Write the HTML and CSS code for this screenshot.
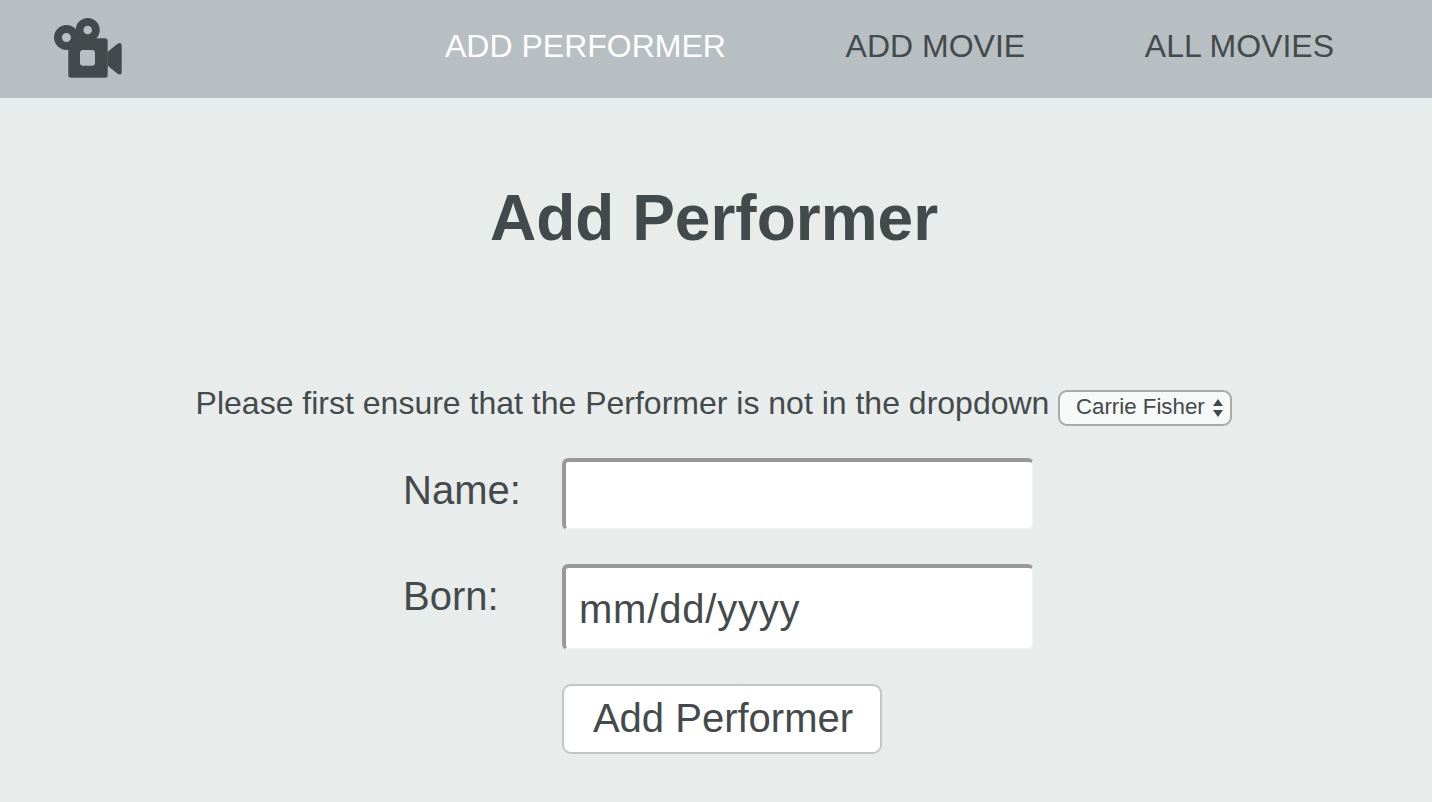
FILE: index.html
```html
<!DOCTYPE html>
<html lang="en">
<head>
<meta charset="utf-8">
<title>Add Performer</title>
<link rel="stylesheet" href="styles.css">
</head>
<body>
<header class="topbar">
  <a class="logo" href="#" aria-label="Home">
    <svg width="70" height="62" viewBox="0 0 70 62" aria-hidden="true">
      <path fill-rule="evenodd" fill="#434a4b" d="M1 21.500a12.500 12.500 0 1 0 25 0a12.500 12.500 0 1 0-25 0ZM8.900 21.500a4.500 4.500 0 1 1 9 0a4.500 4.500 0 1 1-9 0Z"/>
      <path fill-rule="evenodd" fill="#434a4b" d="M22.700 14a12 12 0 1 0 24 0a12 12 0 1 0-24 0ZM30.400 14a4.300 4.300 0 1 1 8.600 0a4.300 4.300 0 1 1-8.600 0Z"/>
      <path fill-rule="evenodd" fill="#434a4b" d="M15.300 33 24 22.300H52a2.700 2.700 0 0 1 2.700 2.700V59a2.700 2.700 0 0 1-2.700 2.700H18A2.700 2.700 0 0 1 15.300 59ZM30 34a3 3 0 0 0-3 3v9.700a3 3 0 0 0 3 3h9a3 3 0 0 0 3-3V37a3 3 0 0 0-3-3Z"/>
      <path fill="#434a4b" d="M54.500 36 64.500 27.700Q68.700 25.500 68.700 29.500V56Q68.700 60 64.500 57.800L54.500 49.500Z"/>
    </svg>
  </a>
  <nav class="nav">
    <a class="nav-link active" href="#">ADD PERFORMER</a>
    <a class="nav-link" href="#">ADD MOVIE</a>
    <a class="nav-link" href="#">ALL MOVIES</a>
  </nav>
</header>
<main class="content">
  <h1 class="title">Add Performer</h1>
  <p class="notice">
    <span>Please first ensure that the Performer is not in the dropdown</span>
    <span class="select"><span class="select-text">Carrie Fisher</span>
      <svg class="select-arrows" width="10" height="18" viewBox="0 0 10 18" aria-hidden="true"><path fill="#434a4b" d="M5 0 10 7H0ZM5 18 0 11H10Z"/></svg>
    </span>
  </p>
  <form class="form">
    <label class="label" for="name">Name:</label>
    <input class="field field-name" id="name" type="text">
    <label class="label" for="born">Born:</label>
    <input class="field field-born" id="born" type="text" placeholder="mm/dd/yyyy">
    <button class="submit" type="button">Add Performer</button>
  </form>
</main>
</body>
</html>
```

FILE: styles.css
```css
* { box-sizing: border-box; }
html, body { height: 100%; }
body {
  margin: 0;
  background: #e8eceb;
  color: #434a4b;
  font-family: "Liberation Sans", Arial, sans-serif;
  overflow: hidden;
}
.topbar {
  height: 98px;
  background: #b7bfc2;
  display: flex;
  align-items: center;
  padding-left: 53px;
}
.logo { display: block; height: 62px; margin-top: -4px; }
.nav {
  display: flex;
  gap: 119.700px;
  margin-left: 322px;
  margin-top: -6px;
}
.nav-link {
  color: #434a4b;
  font-size: 32px;
  text-decoration: none;
}
.nav-link.active { color: #fff; }
.content { display: flex; flex-direction: column; align-items: center; }
.title {
  margin: 83px 0 0 -4px;
  font-size: 64px;
  line-height: 74px;
  font-weight: 700;
}
.notice {
  margin: 130px 0 0 -4px;
  display: flex;
  align-items: center;
  gap: 9px;
  font-size: 32px;
  line-height: 36px;
  height: 36px;
}
.select {
  margin-top: 10px;
  width: 174px;
  height: 36px;
  padding: 0 7px 0 15.500px;
  display: flex;
  align-items: center;
  justify-content: space-between;
  font-size: 22.300px;
  line-height: 26px;
  background: #f7f8f8;
  border: 2px solid #a9a9a9;
  border-radius: 9px;
}
.select-text { white-space: nowrap; margin-bottom: 3px; }
.select-arrows { flex-shrink: 0; }
.form {
  margin: 37px 0 0 5px;
  display: grid;
  grid-template-columns: 159px 472px;
  align-items: start;
}
.label {
  font-size: 40px;
  line-height: 46px;
  margin-top: 9px;
}
.field {
  width: 472px;
  border: 0;
  border-top: 4px solid #999;
  border-left: 4px solid #999;
  border-right: 2px solid #eef0ef;
  border-bottom: 2px solid #eef0ef;
  border-radius: 6px;
  background: #fff;
  outline: 0;
  padding: 4px 13px 2px;
  color: #434a4b;
  font: 40px "Liberation Sans", Arial, sans-serif;
}
.field::placeholder { color: #434a4b; opacity: 1; }
.field-name { height: 72px; margin-bottom: 34px; }
.field-born { height: 86px; margin-bottom: 34px; letter-spacing: 0.800px; }
.submit {
  grid-column: 2;
  width: 320px;
  height: 70px;
  padding: 0 0 2px 2px;
  background: #fff;
  color: #434a4b;
  border: 2px solid #c4c6c6;
  border-radius: 9px;
  font: 40px "Liberation Sans", Arial, sans-serif;
}
```
